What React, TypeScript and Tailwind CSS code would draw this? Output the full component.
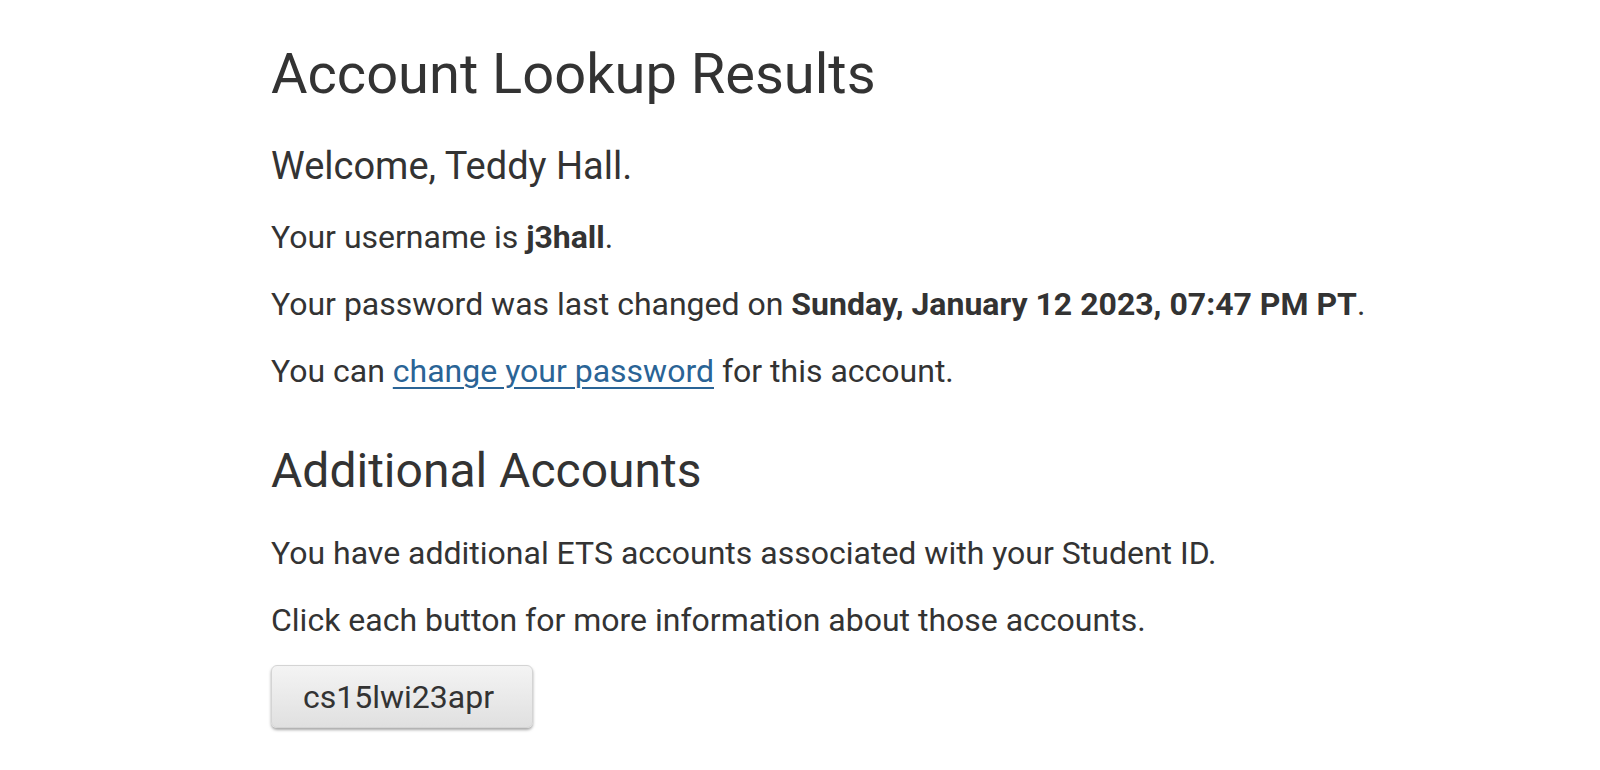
import React from "react";

export default function App() {
  return (
    <div className="min-h-screen bg-white text-[#333333]" style={{ fontFamily: "Roboto, 'Liberation Sans', sans-serif" }}>
      <div className="w-[1058px] mx-auto pt-[44px]">
        <h1 className="text-[56px] leading-[61.6px] font-normal">Account Lookup Results</h1>
        <h3 className="mt-[39px] text-[38px] leading-[42px] font-normal">Welcome, Teddy Hall.</h3>
        <p className="mt-[29px] text-[32px] leading-[42px] whitespace-nowrap">
          Your username is <b className="font-bold">j3hall</b>.
        </p>
        <p className="mt-[25px] text-[32px] leading-[42px] whitespace-nowrap">
          Your password was last changed on <b className="font-bold">Sunday, January 12 2023, 07:47 PM PT</b>.
        </p>
        <p className="mt-[25px] text-[32px] leading-[42px] whitespace-nowrap">
          You can{" "}
          <a href="#" className="text-[#2a6496] underline underline-offset-[5px] decoration-[2px]">
            change your password
          </a>{" "}
          for this account.
        </p>
        <h2 className="mt-[53px] text-[48px] leading-[52.8px] font-normal">Additional Accounts</h2>
        <p className="mt-[35px] text-[32px] leading-[42px] whitespace-nowrap">
          You have additional ETS accounts associated with your Student ID.
        </p>
        <p className="mt-[25px] text-[32px] leading-[42px] whitespace-nowrap">
          Click each button for more information about those accounts.
        </p>
        <button className="mt-[24px] h-[63px] w-[262px] rounded-[6px] border border-[#d4d4d4] bg-gradient-to-b from-[#f4f4f4] to-[#e0e0e0] pl-[31px] text-left text-[32px] text-[#333333] shadow-[0_2px_3px_rgba(0,0,0,0.35)]">
          cs15lwi23apr
        </button>
      </div>
    </div>
  );
}
